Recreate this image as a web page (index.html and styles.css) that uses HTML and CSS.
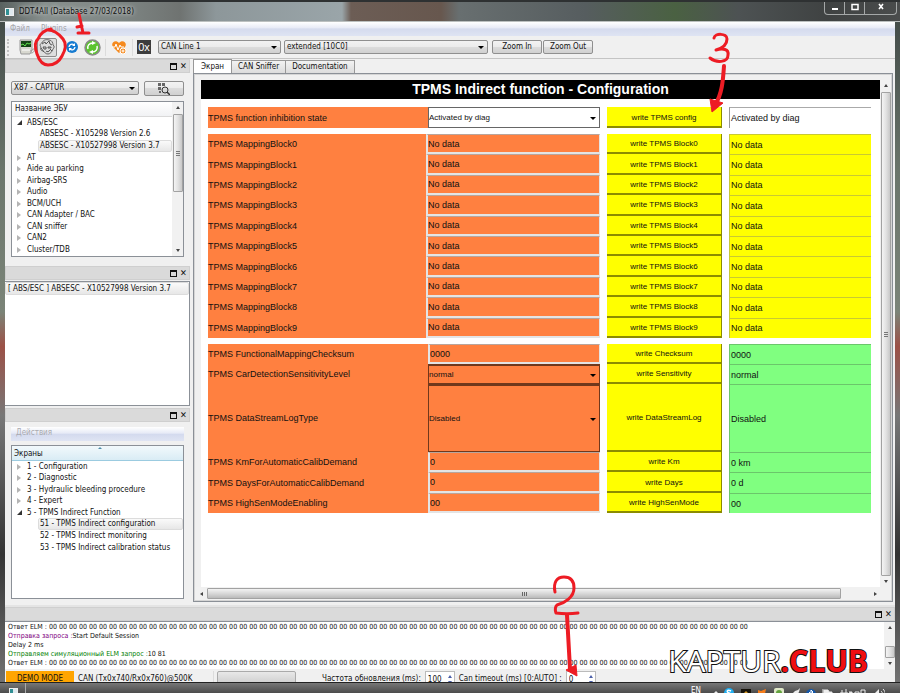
FILE: index.html
```html
<!DOCTYPE html>
<html lang="ru">
<head>
  <meta charset="UTF-8" />
  <meta name="viewport" content="width=device-width, initial-scale=1.0"/>
  <title>DDT4All</title>
  <link rel="stylesheet" href="styles.css">
</head>
<body>
  <div class="window">
    <header class="titlebar">
      <span class="app-icon"></span>
      <span class="caption">DDT4All (Database 27/03/2018)</span>
      <div class="win-buttons">
        <button aria-label="Minimize"><svg width="12" height="10"><path d="M3 6h6v2H3z" fill="#fff"/></svg></button>
        <button aria-label="Maximize"><svg width="12" height="10"><path d="M3 2.500h6v5H3z" fill="none" stroke="#fff" stroke-width="1.500"/></svg></button>
        <button class="close" aria-label="Close"><svg width="12" height="10"><path d="M4 2l4 5M8 2L4 7" fill="none" stroke="#fff" stroke-width="1.600"/></svg></button>
      </div>
    </header>

    <div class="client">
      <nav class="menubar"><a href="#">Файл</a><a href="#">Plugins</a></nav>

      <div class="toolbar">
        <span class="grip"></span>
        <button class="tool" aria-label="Scan">
          <svg width="18" height="18" viewBox="0 0 18 18"><path d="M2 2h12v10l-2 4H3l-1-4z" fill="#d8d8d0" stroke="#999"/><path d="M12 13c3 0 3-3 4-2s0 4-3 4" fill="none" stroke="#999"/><path d="M3 3h10v6H3z" fill="#174417"/><path d="M3 7l2-1 2 2 2-3 2 1 2-1" fill="none" stroke="#5fe04c"/><path d="M4 12h8" stroke="#fff"/></svg>
        </button>
        <button class="tool pressed" aria-label="Expert mode">
          <svg width="18" height="18" viewBox="0 0 18 18"><path d="M3 9c-2-2 0-4 1-4 1-3 4-4 7-3 3 0 4 3 4 5 2 1 1 3 0 4-1 3-3 5-5 5-3 0-3-2-5-3-2 0-3-2-2-4z" fill="#ddd" stroke="#666"/><path d="M4 6l3-2 1 2 3-3 1 3 2 1M5 9h3v2H6zM10 9h3v1h-3zM8 13c1 1 3 1 4-1M3 10l3 4M12 11l2 2" fill="none" stroke="#555"/></svg>
        </button>
        <button class="tool small" aria-label="Refresh">
          <svg width="12" height="12" viewBox="0 0 12 12"><circle cx="6" cy="6" r="6" fill="#167bd0"/><path d="M3 6a3 3 0 0 1 5-2M9 6a3 3 0 0 1-5 2" fill="none" stroke="#fff" stroke-width="1.300"/><path d="M9 2v3H6zM3 10V7h3z" fill="#fff"/></svg>
        </button>
        <button class="tool" aria-label="Reload">
          <svg width="17" height="17" viewBox="0 0 17 17"><circle cx="8.500" cy="8.500" r="7.500" fill="#5cc430" stroke="#8a8a8a" stroke-width="1.500"/><path d="M4 10c-1-3 1-6 5-6M13 7c1 3-1 6-5 6" fill="none" stroke="#fff" stroke-width="1.500"/><path d="M8 2l4 2-4 2zM9 15l-4-2 4-2z" fill="#fff"/></svg>
        </button>
        <span class="divider"></span>
        <button class="tool" aria-label="Tester present">
          <svg width="17" height="15" viewBox="0 0 17 15"><path d="M8 13L2 7C-1 2 5-1 8 3c3-4 9-1 6 4z" fill="#f58a1f"/><path d="M1 7h3l1-3 2 6 2-5 1 2h3" fill="none" stroke="#fff"/><circle cx="12" cy="11" r="3" fill="#f58a1f" stroke="#fff"/><path d="M12 9.500v3M10.500 11h3" stroke="#fff"/></svg>
        </button>
        <span class="divider"></span>
        <button class="hex" aria-label="Hex input">0x</button>
        <span class="select line"><select aria-label="CAN line"><option>CAN Line 1</option></select></span>
        <span class="select session"><select aria-label="Session"><option>extended [10C0]</option></select></span>
        <button class="btn zoom">Zoom In</button>
        <button class="btn zoom">Zoom Out</button>
      </div>

      <div class="main">
        <aside class="side">
          <section class="dock">
            <div class="dock-title"><i class="float"></i><i class="x">✕</i></div>
            <div class="dock-body">
              <div class="pick">
                <span class="select"><select aria-label="Project"><option>X87 - CAPTUR</option></select></span>
                <button class="btn" aria-label="Search ECU"><svg width="12" height="12" viewBox="0 0 12 12"><path d="M0 0h3v3H0zM4 0h3v3H4zM0 4h3v3H0zM1 8h2v2H1z" fill="#666"/><circle cx="7" cy="7" r="3" fill="none" stroke="#333"/><path d="M9 9l3 3" stroke="#333" stroke-width="1.500"/></svg></button>
              </div>
              <div class="list ecu">
                <div class="list-main">
                  <div class="list-head">Название ЭБУ</div>
                  <ul class="tree">
                    <li class="open">ABS/ESC</li>
                    <li class="child">ABSESC - X105298 Version 2.6</li>
                    <li class="child selected">ABSESC - X10527998 Version 3.7</li>
                    <li>AT</li>
                    <li>Aide au parking</li>
                    <li>Airbag-SRS</li>
                    <li>Audio</li>
                    <li>BCM/UCH</li>
                    <li>CAN Adapter / BAC</li>
                    <li>CAN sniffer</li>
                    <li>CAN2</li>
                    <li>Cluster/TDB</li>
                  </ul>
                </div>
                <div class="vscroll"><i class="up"></i><span class="thumb tree-thumb"></span><i class="down"></i></div>
              </div>
            </div>
          </section>

          <section class="dock">
            <div class="dock-title"><i class="float"></i><i class="x">✕</i></div>
            <div class="opened"><div class="opened-item">[ ABS/ESC ] ABSESC - X10527998 Version 3.7</div></div>
          </section>

          <section class="dock">
            <div class="dock-title"><i class="float"></i><i class="x">✕</i></div>
            <div class="dock-body screens">
              <nav class="actions"><a href="#">Действия</a></nav>
              <div class="list">
                <div class="list-main">
                  <div class="list-head sorted">Экраны</div>
                  <ul class="tree short">
                    <li>1 - Configuration</li>
                    <li>2 - Diagnostic</li>
                    <li>3 - Hydraulic bleeding procedure</li>
                    <li>4 - Expert</li>
                    <li class="open">5 - TPMS Indirect Function</li>
                    <li class="child selected">51 - TPMS Indirect configuration</li>
                    <li class="child">52 - TPMS Indirect monitoring</li>
                    <li class="child">53 - TPMS Indirect calibration status</li>
                  </ul>
                </div>
              </div>
            </div>
          </section>
        </aside>

        <main class="content">
          <div class="tabs">
            <button class="tab active">Экран</button>
            <button class="tab">CAN Sniffer</button>
            <button class="tab">Documentation</button>
          </div>
          <div class="pane">
            <div class="view">
              <div class="screen">
                <h1>TPMS Indirect function - Configuration</h1>

                <div class="group first">
                  <div class="row"><label for="f0">TPMS function inhibition state</label><span class="combo white"><select id="f0"><option>Activated by diag</option></select></span><button>write TPMS config</button><output>Activated by diag</output></div>
                </div>

                <div class="group blocks">
                  <div class="row"><label for="b0">TPMS MappingBlock0</label><input id="b0" value="No data"><button>write TPMS Block0</button><output>No data</output></div>
                  <div class="row"><label for="b1">TPMS MappingBlock1</label><input id="b1" value="No data"><button>write TPMS Block1</button><output>No data</output></div>
                  <div class="row"><label for="b2">TPMS MappingBlock2</label><input id="b2" value="No data"><button>write TPMS Block2</button><output>No data</output></div>
                  <div class="row"><label for="b3">TPMS MappingBlock3</label><input id="b3" value="No data"><button>write TPMS Block3</button><output>No data</output></div>
                  <div class="row"><label for="b4">TPMS MappingBlock4</label><input id="b4" value="No data"><button>write TPMS Block4</button><output>No data</output></div>
                  <div class="row"><label for="b5">TPMS MappingBlock5</label><input id="b5" value="No data"><button>write TPMS Block5</button><output>No data</output></div>
                  <div class="row"><label for="b6">TPMS MappingBlock6</label><input id="b6" value="No data"><button>write TPMS Block6</button><output>No data</output></div>
                  <div class="row"><label for="b7">TPMS MappingBlock7</label><input id="b7" value="No data"><button>write TPMS Block7</button><output>No data</output></div>
                  <div class="row"><label for="b8">TPMS MappingBlock8</label><input id="b8" value="No data"><button>write TPMS Block8</button><output>No data</output></div>
                  <div class="row"><label for="b9">TPMS MappingBlock9</label><input id="b9" value="No data"><button>write TPMS Block9</button><output>No data</output></div>
                </div>

                <div class="group params">
                  <div class="row"><label for="p0">TPMS FunctionalMappingChecksum</label><input id="p0" value="0000"><button>write Checksum</button><output>0000</output></div>
                  <div class="row"><label for="p1">TPMS CarDetectionSensitivityLevel</label><span class="combo"><select id="p1"><option>normal</option></select></span><button>write Sensitivity</button><output>normal</output></div>
                  <div class="row"><label for="p2">TPMS DataStreamLogType</label><span class="combo"><select id="p2"><option>Disabled</option></select></span><button>write DataStreamLog</button><output>Disabled</output></div>
                  <div class="row"><label for="p3">TPMS KmForAutomaticCalibDemand</label><input id="p3" value="0"><button>write Km</button><output>0 km</output></div>
                  <div class="row"><label for="p4">TPMS DaysForAutomaticCalibDemand</label><input id="p4" value="0"><button>write Days</button><output>0 d</output></div>
                  <div class="row"><label for="p5">TPMS HighSenModeEnabling</label><input id="p5" value="00"><button>write HighSenMode</button><output>00</output></div>
                </div>
              </div>
              <div class="vscroll"><i class="up"></i><span class="thumb view-thumb"></span><i class="down"></i></div>
            </div>
            <div class="hscroll"><i class="left"></i><span class="thumb"></span><i class="right"></i></div>
          </div>
        </main>
      </div>

      <section class="logdock">
        <div class="dock-title"><i class="float"></i><i class="x">✕</i></div>
        <div class="log">
          <div class="log-text">
            <p>Ответ ELM : 00 00 00 00 00 00 00 00 00 00 00 00 00 00 00 00 00 00 00 00 00 00 00 00 00 00 00 00 00 00 00 00 00 00 00 00 00 00 00 00 00 00 00 00 00 00 00 00 00 00 00 00 00 00 00 00 00 00 00 00 00 00 00 00 00 00 00 00 00 00</p>
            <p><span class="sent">Отправка запроса :</span>Start Default Session</p>
            <p>Delay 2 ms</p>
            <p><span class="simulated">Отправляем симуляционный ELM запрос :</span>10 81</p>
            <p>Ответ ELM : 00 00 00 00 00 00 00 00 00 00 00 00 00 00 00 00 00 00 00 00 00 00 00 00 00 00 00 00 00 00 00 00 00 00 00 00 00 00 00 00 00 00 00 00 00 00 00 00 00 00 00 00 00 00 00 00 00 00 00 00 00 00 00 00 00 00 00 00 00 00</p>
          </div>
          <div class="vscroll"><i class="up"></i><span class="thumb log-thumb"></span><i class="down"></i></div>
        </div>
      </section>

      <footer class="status">
        <span class="demo">DEMO MODE</span>
        <span class="can">CAN (Tx0x740/Rx0x760)@500K</span>
        <span class="progress"></span>
        <label class="rate" for="rate">Частота обновления (ms):</label>
        <span class="spin"><input id="rate" value="100"><i class="up"></i><i class="down"></i></span>
        <label for="timeout">Can timeout (ms) [0:AUTO] :</label>
        <span class="spin"><input id="timeout" value="0"><i class="up"></i><i class="down"></i></span>
      </footer>
    </div>

    <div class="taskbar">
      <span class="task"><span class="app-icon"></span></span>
      <span class="lang">EN</span>
      <svg class="tray" width="160" height="16" viewBox="0 0 160 16">
        <path d="M0 7l3-3 3 3z" fill="#eee"/>
        <circle cx="16" cy="6" r="5" fill="#20aef0"/><path d="M18 4c-4-2-5 1-2 2s2 4-2 2" fill="none" stroke="#fff" stroke-width="1.500"/>
        <path d="M28 2h10v10H28z" fill="#15120a"/><path d="M31 7h4v4h-4zM32 7V5h2v2" fill="#d89b28" stroke="#d89b28"/>
        <path d="M45 3l3 1 5-2-1 5 1 6h-8z" fill="#f57c1b"/>
        <rect x="61" y="1" width="10" height="11" rx="2" fill="#dfe8c8"/><circle cx="66" cy="6" r="3" fill="#63a33e"/><path d="M64 7h4v3h-4z" fill="#c8412e"/>
        <path d="M77 9l5-5 3-1 2-2-1 4-4 6h-4z" fill="#eee"/>
        <circle cx="98" cy="7" r="5" fill="#1557a8"/><path d="M96 5l4 4-2 2V3l2 2-4 4" fill="none" stroke="#fff"/>
        <path d="M110 2v10M111 3h4l1 2h3v5h-8z" fill="#eee" stroke="#eee"/>
        <path d="M127 6h8v6h-6zM129 3v3M133 2v4M136 5h3v6" fill="#ddd" stroke="#eee"/>
        <path d="M142 5h4v4h-4zM148 3h4v6h-4z" fill="none" stroke="#eee"/>
      </svg>
      <svg class="volume" width="12" height="14" viewBox="0 0 12 14"><path d="M0 6h2l4-4v9L2 8H0z" fill="#eee"/><path d="M8 4c2 2 2 4 0 6M10 2c3 3 3 7 0 10" fill="none" stroke="#eee"/></svg>
    </div>

    <!-- step markers drawn over the window -->
    <svg class="marks" viewBox="0 0 900 693" width="900" height="693">
      <g fill="none" stroke="#ed1c24" stroke-width="3" stroke-linecap="round" stroke-linejoin="round">
        <path d="M51 29C44 30 40 34 38 39c-4 3-3 9-1 15 2 6 5 11 11 11 7 0 11-3 14-9 4-7 5-12 1-17-4-5-8-9-15-9"/>
        <path d="M79 14l4 19M77 27l5-1M78 33h11"/>
        <path d="M714 38c1-5 13-5 13 1 0 5-4 9-11 11 7-2 13-1 12 5 0 8-12 8-18 3"/>
        <path d="M724 66c-1 15-2 28-9 39" stroke-width="4"/>
        <path d="M555 592c-2-10 2-15 9-15 8 0 10 5 10 11 0 9-9 15-17 17-2 2-2 5-1 8 7 1 15 1 22 0"/>
        <path d="M567 615l3 54" stroke-width="4"/>
      </g>
      <path d="M710 99l13 4-11 9zM566 670l10-5 1 11z" fill="#ed1c24" stroke="#ed1c24" stroke-linejoin="round"/>
    </svg>
    <div class="watermark">KAPTUR<b>.CLUB</b></div>
  </div>
</body>
</html>
```
FILE: styles.css
```css
* { box-sizing: border-box; }
body {
  margin: 0;
  font-family: "DejaVu Sans Condensed", "DejaVu Sans", sans-serif;
  font-size: 8px;
  line-height: 12px;
  color: #111;
}
button, input, select {
  font: inherit;
  color: inherit;
  margin: 0;
  padding: 0;
  border: none;
  background: none;
  min-width: 0;
}
select {
  appearance: none;
  width: 100%;
  height: 100%;
  padding: 0 2px;
}
a { color: inherit; text-decoration: none; }
i { font-style: normal; }
p, ul { margin: 0; padding: 0; list-style: none; }

/* window frame */
.window {
  position: relative;
  display: flex;
  flex-direction: column;
  height: 100vh;
  overflow: hidden;
  background: linear-gradient(#3e4644, #6b766c 25%, #7b8478 45%, #9c5147 50%, #777 60%, #333 80%, #777);
}
.titlebar {
  flex: none;
  display: flex;
  align-items: center;
  height: 22px;
  padding: 0 3px 0 5px;
  border-top: 2px solid #2e3132;
  border-bottom: 1px solid #bcc0c0;
  background: linear-gradient(90deg, #59615f, #88908e 5%, #7f8785 13%, #6f7371 20%, #8d979a 24%, #9aa5a9 38%, #6c5d55 39%, #67574e 49%, #686f70 51%, #565d5f 65%, #4a6142 75%, #4d5253 82%, #3f4242 92%, #4a4c4c);
}
.app-icon {
  width: 9px;
  height: 8px;
  border: 1px solid #eee;
  background: linear-gradient(90deg, #2f8f93 50%, #dfe9ee 50%);
}
.caption { margin-left: 5px; text-shadow: 0 0 4px #fff; }
.win-buttons {
  display: flex;
  align-self: flex-start;
  margin-left: auto;
  height: 13px;
  border: 1px solid #a5a8a8;
  border-top: none;
  border-radius: 0 0 4px 4px;
}
.win-buttons button { width: 20px; border-right: 1px solid #a5a8a8; line-height: 10px; }
.win-buttons .close { width: 31px; border-right: none; }
.client {
  flex: 1;
  min-height: 0;
  display: flex;
  flex-direction: column;
  margin: 0 5px;
  background: #f0f0f0;
  overflow: hidden;
}
.menubar {
  flex: none;
  display: flex;
  gap: 11px;
  height: 14px;
  padding: 1px 5px;
  color: #a5a5a8;
  background: linear-gradient(#fff, #e9ecf7 40%, #d5dbee 50%, #dfe4f3);
}

/* toolbar */
.toolbar {
  flex: none;
  display: flex;
  align-items: center;
  height: 23px;
  padding-left: 2px;
  border-bottom: 1px solid #c4c4c4;
}
.grip { width: 3px; height: 17px; margin-right: 7px; border-left: 2px dotted #c2c2c2; }
.tool { display: flex; align-items: center; justify-content: center; width: 20px; height: 19px; }
.tool.pressed { border: 1px solid #8c8c8c; border-radius: 2px; background: #dedede; }
.tool.small { width: 25px; padding-left: 4px; }
.divider { width: 1px; height: 17px; margin: 0 3px; background: #dcdcdc; }
.hex {
  width: 14px;
  height: 14px;
  margin: 0 7px 0 1px;
  background: #3c3c3c;
  color: #fff;
  font: 11px "Liberation Sans", sans-serif;
}
.select {
  position: relative;
  height: 14px;
  border: 1px solid #8f8f8f;
  border-radius: 2px;
  background: linear-gradient(#f2f2f2, #ebebeb 50%, #dcdcdc 50%, #d0d0d0);
}
.select::after, .combo::after {
  content: "";
  position: absolute;
  right: 3px;
  top: calc(50% - 1px);
  border: 3px solid transparent;
  border-top-color: #000;
  border-bottom: none;
  pointer-events: none;
}
.select.line { flex: 0 1 123px; margin-right: 3px; }
.select.session { flex: 0 1 204px; margin-right: 4px; }
.btn {
  height: 14px;
  border: 1px solid #8f8f8f;
  border-radius: 2px;
  background: linear-gradient(#f3f3f3, #ebebeb 50%, #dcdcdc 50%, #d0d0d0);
}
.btn.zoom { width: 50px; margin-right: 1px; }

/* docks */
.main { flex: 1; min-height: 0; display: flex; }
.side { flex: 0 0 185px; display: flex; flex-direction: column; }
.dock-title {
  display: flex;
  align-items: center;
  justify-content: flex-end;
  gap: 3px;
  height: 14px;
  padding-right: 1px;
  border: 1px solid #cfcfcf;
  background: #dadada;
}
.dock-title .x { width: 8px; font-size: 9px; font-weight: bold; line-height: 12px; }
.float { position: relative; width: 7px; height: 7px; }
.float::before, .float::after {
  content: "";
  position: absolute;
  width: 5px;
  height: 4px;
  border: 1px solid #111;
  background: #dadada;
}
.float::before { right: 0; top: 0; }
.float::after { left: 0; bottom: 0; }
.dock-body { padding: 8px 6px 10px; }
.pick { display: flex; gap: 5px; margin-bottom: 5px; }
.pick .select { flex: 1; }
.pick .btn { flex: 0 0 40px; height: 15px; line-height: 1px; }
.list { display: flex; border: 1px solid #8b9097; background: #fff; }
.ecu { height: 156px; }
.list-main { flex: 1; min-width: 0; }
.list-head {
  height: 15px;
  padding: 1px 3px;
  border-bottom: 1px solid #d9d9d9;
  background: linear-gradient(#fff, #f1f2f4);
}
.list-head.sorted {
  position: relative;
  padding: 2px;
  background: linear-gradient(#f2f9fc, #d9ecf5);
  border-bottom-color: #9bcbe0;
}
.sorted::before {
  content: "";
  position: absolute;
  left: 50%;
  top: 1px;
  border: 2px solid transparent;
  border-top: none;
  border-bottom-color: #4f8daa;
}
.tree { display: grid; grid-auto-rows: 1fr; height: 138px; white-space: nowrap; }
.tree.short { height: 92px; }
.tree li { position: relative; margin-left: 12px; padding-left: 3px; line-height: 11px; }
.tree li::before {
  content: "";
  position: absolute;
  left: -7px;
  top: 3px;
  width: 0;
  border: 3px solid transparent;
  border-left: 4px solid #b4b4b4;
  border-right: none;
}
.tree li.open::before {
  border: none;
  border-left: 5px solid transparent;
  border-bottom: 5px solid #333;
}
.tree li.child { margin-left: 26px; padding-left: 2px; }
.tree li.child::before { display: none; }
.selected, .opened-item {
  border: 1px solid #dcdcdc;
  border-radius: 2px;
  background: linear-gradient(#fafafa, #e7e7e7);
}
.tree li.selected { padding-left: 1px; line-height: 10px; }
.opened {
  height: 125px;
  margin: 1px 0 2px;
  border: 1px solid #8b9097;
  border-left: none;
  background: #fff;
}
.opened-item { padding-left: 2px; line-height: 11px; white-space: nowrap; }
.side .dock:first-child { height: 207px; }
.dock-body.screens { padding-top: 5px; }
.actions {
  height: 14px;
  margin-bottom: 4px;
  padding: 0 5px;
  color: #a9aab0;
  background: linear-gradient(#fff, #e6eaf6 45%, #d3daee 50%, #dfe4f3);
}
.screens .list { height: 154px; }

/* scrollbars */
.vscroll {
  flex: 0 0 11px;
  display: flex;
  flex-direction: column;
  align-items: center;
  padding: 4px 0;
  background: #f1f1f1;
}
.up, .down { width: 0; border: 2px solid transparent; }
.up { border-top: none; border-bottom: 3px solid #444; }
.down { margin-top: auto; border-bottom: none; border-top: 3px solid #444; }
.thumb { border: 1px solid #a2a2a2; border-radius: 1px; background: linear-gradient(90deg, #f4f4f4, #e2e2e2 50%, #c8c8c8); }
.vscroll .thumb { width: 10px; margin-top: 5px; }
.tree-thumb { height: 78px; }
.tree-thumb::after, .view-thumb::after {
  content: "";
  display: block;
  width: 4px;
  height: 5px;
  margin: 0 auto;
  background: repeating-linear-gradient(#777 0 1px, transparent 1px 2px);
}
.tree-thumb, .view-thumb { display: flex; align-items: center; }
.view-thumb { flex: 1; margin-bottom: 4px; }
.vscroll .log-thumb { height: 12px; margin: auto 0 4px; }
.log-thumb + .down { margin-top: 0; }
.hscroll { flex: none; display: flex; align-items: center; height: 13px; padding: 0 14px 0 5px; background: #f1f1f1; }
.hscroll .thumb {
  flex: 0 1 634px;
  display: flex;
  align-items: center;
  justify-content: center;
  height: 11px;
  margin: 0 auto 0 4px;
  background: linear-gradient(#f3f3f3, #d8d8d8 50%, #bababa);
}
.hscroll .thumb::after { content: ""; width: 5px; height: 4px; background: repeating-linear-gradient(90deg, #666 0 1px, transparent 1px 2px); }
.left, .right { border: 2px solid transparent; }
.left { border-left: none; border-right: 3px solid #444; }
.right { border-right: none; border-left: 3px solid #444; }

/* tabs and ECU screen */
.content { flex: 1; min-width: 0; display: flex; flex-direction: column; padding: 0 2px 3px 3px; }
.tabs { flex: none; display: flex; align-items: flex-end; height: 14px; }
.tab {
  height: 13px;
  padding: 0 6px;
  border: 1px solid #989898;
  border-bottom: none;
  background: linear-gradient(#f2f2f2, #dcdcdc);
}
.tab + .tab { border-left: none; }
.tab.active { height: 14px; padding: 0 7px; background: #fff; }
.pane {
  flex: 1;
  min-height: 0;
  display: flex;
  flex-direction: column;
  border: 1px solid #8b9097;
  box-shadow: inset 0 0 0 1px #d5d5d5;
  padding: 6px 1px 1px;
}
.view { flex: 1; min-height: 0; display: flex; padding-left: 6px; }
.screen {
  flex: 1;
  min-width: 0;
  background: #fff;
  font-family: "Liberation Sans", Arial, sans-serif;
  font-size: 9px;
}
h1 {
  margin: 0 0 8px;
  background: #000;
  color: #fff;
  font-size: 14px;
  line-height: 19px;
  text-align: center;
}
.group { display: grid; margin: 0 9px 6px 7px; }
.first { height: 21px; }
.blocks { height: 204px; grid-template-rows: repeat(10, 1fr); }
.params { grid-template-rows: 20px 20px 68px 20px 21px 20px; }
.row { display: grid; grid-template-columns: 220fr 179fr 122fr 142fr; min-height: 0; }
.row label, .row output { display: flex; align-items: center; }
.row label { background: #ff8040; }
.blocks .row { grid-template-columns: 218fr 181fr 122fr 142fr; }
.row input, .combo { margin-right: 7px; background: #ff8040; }
.row input { border: 2px solid #e4e4e4; border-width: 1px 1px 2px 2px; border-top-color: #b9a59c; }
.row button {
  margin-right: 7px;
  padding-top: 2px;
  border: 1px solid #8c8c00;
  border-width: 0 1px 2px 0;
  background: #ff0;
  font-size: 8px;
}
.row output { padding-left: 1px; border-left: 1px solid #999; border-top: 1px solid #aaa; }
.blocks output { background: #ff0; border-color: #c9c932; }
.params output { background: #80ff80; border-color: #6bc66b; }
.combo {
  position: relative;
  border: 1px solid #70381c;
  border-width: 2px 1px 1px 1px;
  font-size: 8px;
}
.combo select { padding: 0; }
.combo.white { background: #fff; border-color: #666; border-width: 1px; }

/* log and status */
.logdock { flex: none; border-top: 2px solid #e4e4e4; }
.log { display: flex; height: 48px; border-top: 1px solid #8b9097; background: #fff; }
.log-text { flex: 1; min-width: 0; padding: 1px 3px; overflow: hidden; white-space: nowrap; font-size: 7px; line-height: 9px; }
.sent { color: #800080; }
.simulated { color: #008000; }
.status { flex: none; display: flex; height: 13px; padding: 2px 1px 0; }
.status label, .status .can { line-height: 15px; white-space: nowrap; }
.demo { width: 68px; height: 15px; background: #ffa500; line-height: 15px; text-align: center; }
.can { flex: 0 1 140px; padding-left: 4px; border-right: 1px solid #dcdcdc; }
.progress { width: 79px; height: 16px; margin-left: 3px; border: 1px solid #aaa; border-radius: 2px; background: linear-gradient(#e8e8e8, #c9c9c9); }
.rate { margin-left: 26px; }
.spin { position: relative; width: 30px; height: 16px; margin: 0 4px; border: 1px solid #bbb; background: #fff; }
.spin input { width: 18px; height: 14px; padding-left: 2px; }
.spin .up, .spin .down { position: absolute; right: 2px; border-bottom-color: #4b5fa8; border-top-color: #4b5fa8; }
.spin .up { top: 3px; border-top: none; }
.spin .down { top: 9px; margin: 0; }
.taskbar {
  flex: none;
  display: flex;
  align-items: flex-start;
  height: 11px;
  border-top: 1px solid #222;
  background: linear-gradient(#777, #4b4b4b);
  overflow: hidden;
}
.task { height: 11px; width: 26px; padding: 5px 9px; border-right: 1px solid #aaa; }
.task .app-icon { display: block; }
.lang { margin-left: auto; padding-top: 3px; color: #fff; line-height: 10px; }
.tray { margin: 4px 0 0 12px; }
.volume { margin: 4px 15px 0 0; }

/* overlays */
.marks { position: absolute; left: 0; top: 0; pointer-events: none; }
.watermark {
  position: absolute;
  right: 32px;
  bottom: 15px;
  font: 30px/34px "Open Sans", sans-serif;
  color: #fff;
  -webkit-text-stroke: 2px #111;
  paint-order: stroke fill;
}
.watermark b { color: #f00e12; }
```
